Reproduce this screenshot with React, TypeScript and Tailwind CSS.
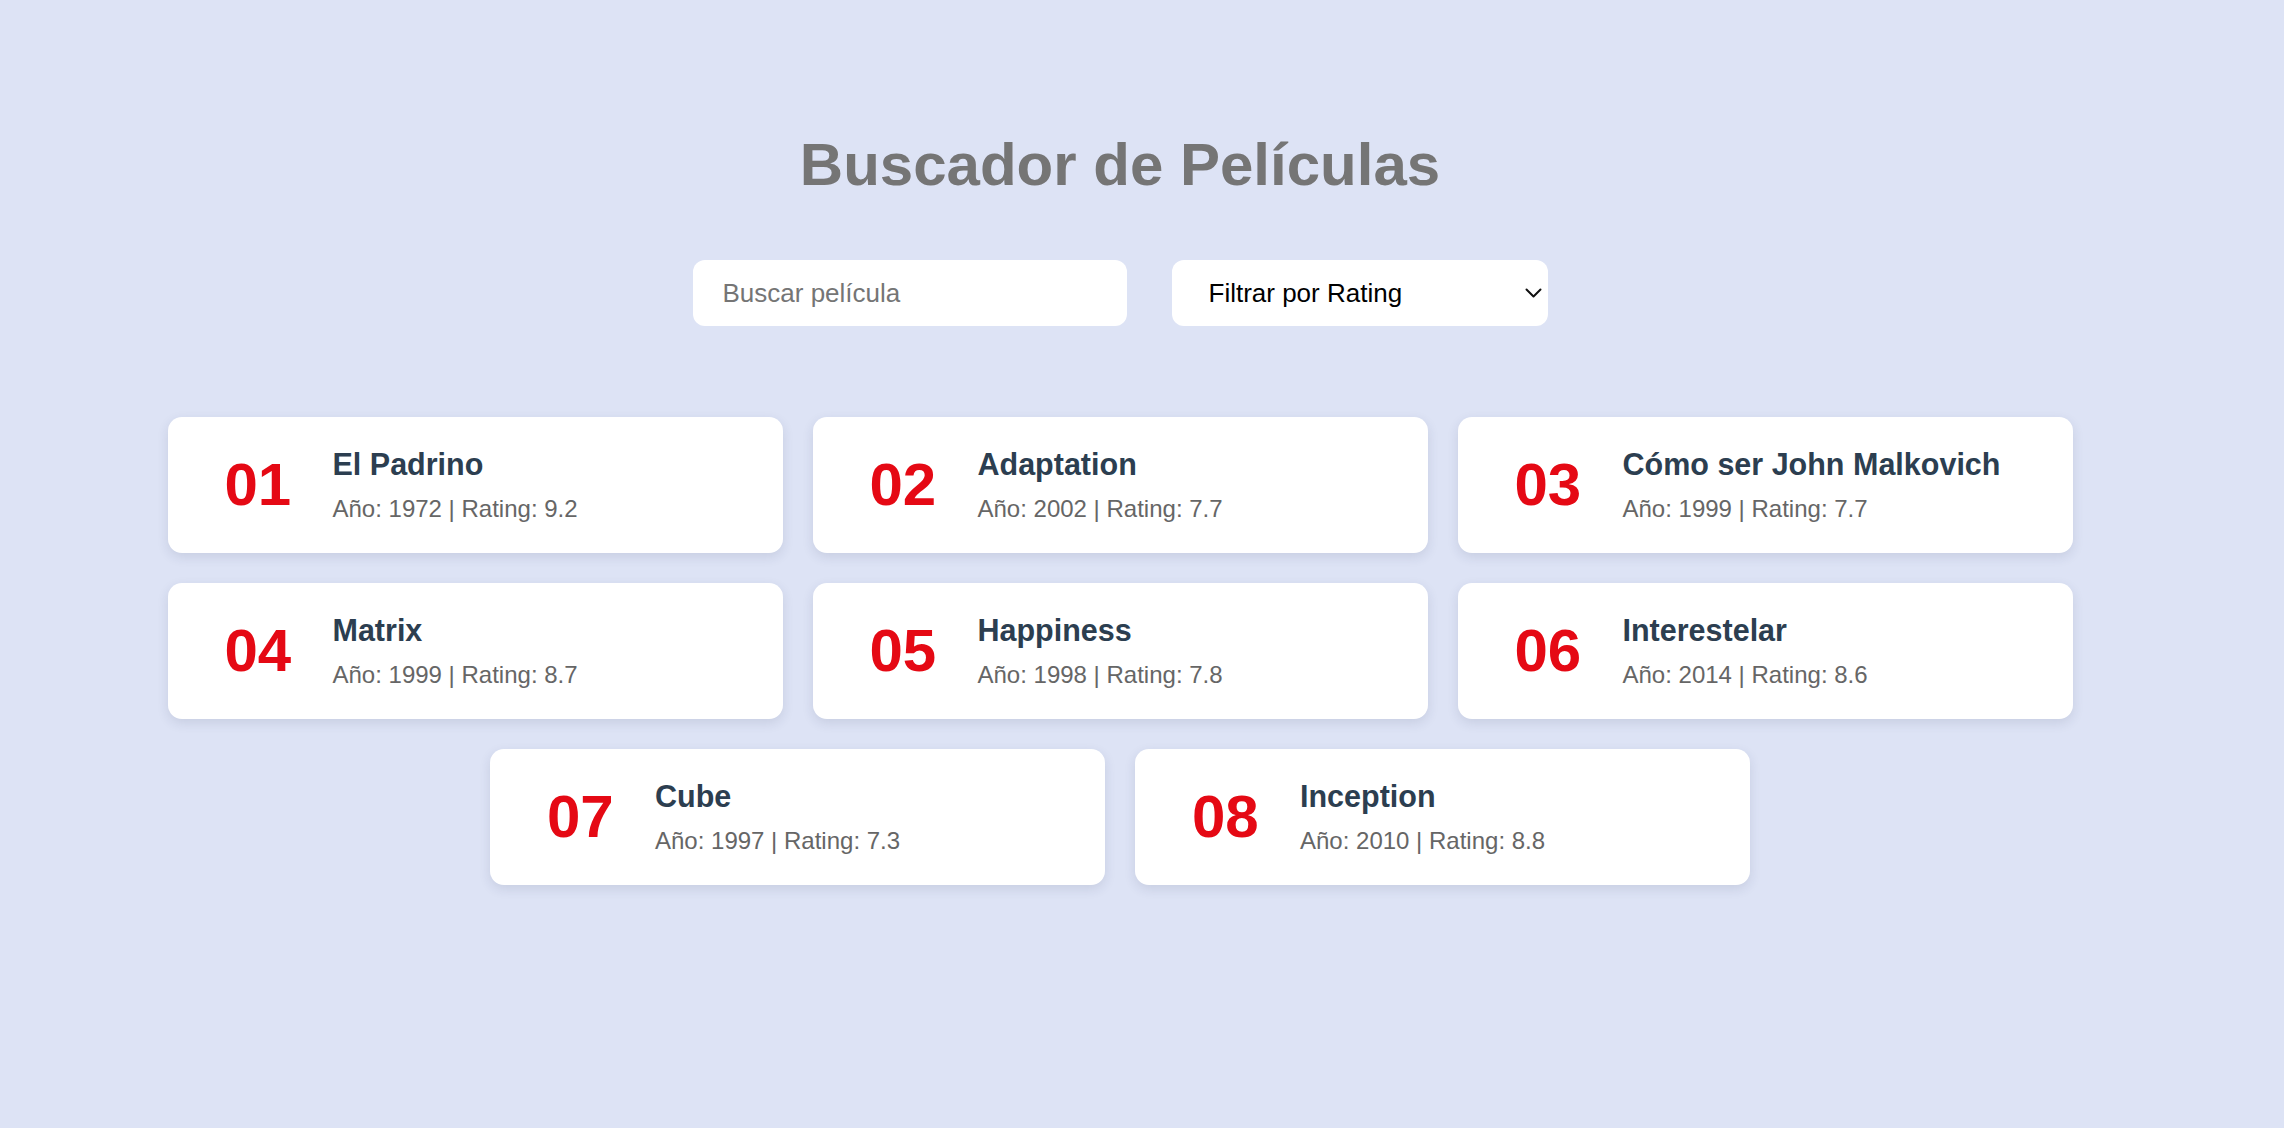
import React, { useState } from 'react';

interface Movie {
  title: string;
  year: number;
  rating: number;
}

const movies: Movie[] = [
  { title: 'El Padrino', year: 1972, rating: 9.2 },
  { title: 'Adaptation', year: 2002, rating: 7.7 },
  { title: 'Cómo ser John Malkovich', year: 1999, rating: 7.7 },
  { title: 'Matrix', year: 1999, rating: 8.7 },
  { title: 'Happiness', year: 1998, rating: 7.8 },
  { title: 'Interestelar', year: 2014, rating: 8.6 },
  { title: 'Cube', year: 1997, rating: 7.3 },
  { title: 'Inception', year: 2010, rating: 8.8 }
];

function MovieCard({ movie, index }: { movie: Movie; index: number }) {
  return (
    <div className="w-[615px] h-[136px] flex items-center pl-[57px] bg-white rounded-[14px] shadow-[0_4px_12px_rgba(40,50,90,0.12)]">
      <div className="w-[108px] shrink-0 text-[60px] leading-none font-bold text-[#e50914]">
        {String(index + 1).padStart(2, '0')}
      </div>
      <div className="flex flex-col">
        <h2 className="text-[30.5px] leading-[34px] font-bold text-[#2c3e50]">
          {movie.title}
        </h2>
        <p className="mt-[14px] text-[24px] leading-[28px] text-[#666666]">
          Año: {movie.year} | Rating: {movie.rating}
        </p>
      </div>
    </div>
  );
}

export default function App() {
  const [query, setQuery] = useState('');
  const [minRating, setMinRating] = useState('');

  const filtered = movies
    .map((m, i) => ({ m, i }))
    .filter(({ m }) => m.title.toLowerCase().includes(query.toLowerCase()))
    .filter(({ m }) => !minRating || m.rating >= Number(minRating));

  return (
    <div className="min-h-screen bg-[#dde3f5] font-['Liberation_Sans',Arial,sans-serif] pr-[44px]">
      <div className="flex flex-col items-center pt-[130px] pb-20">
        <h1 className="text-[60px] leading-[69px] font-bold text-[#757575]">
          Buscador de Películas
        </h1>

        <div className="mt-[61px] flex gap-[45px]">
          <input
            type="text"
            value={query}
            onChange={(e) => setQuery(e.target.value)}
            placeholder="Buscar película"
            className="w-[434px] h-[66px] px-[30px] rounded-[12px] bg-white text-[26px] text-black placeholder:text-[#757575] outline-none"
          />
          <div className="relative w-[376px] h-[66px]">
            <select
              value={minRating}
              onChange={(e) => setMinRating(e.target.value)}
              className="w-full h-full appearance-none pl-[37px] pr-12 rounded-[12px] bg-white text-[26px] text-black outline-none"
            >
              <option value="">Filtrar por Rating</option>
              <option value="9">9+</option>
              <option value="8">8+</option>
              <option value="7">7+</option>
            </select>
            <svg
              className="absolute right-[6px] top-1/2 -translate-y-1/2 pointer-events-none"
              width="17"
              height="10"
              viewBox="0 0 17 10"
              fill="none"
            >
              <path d="M1.5 1.5 L8.5 8.5 L15.5 1.5" stroke="#111" strokeWidth="2" strokeLinecap="round" strokeLinejoin="round" />
            </svg>
          </div>
        </div>

        <div className="mt-[91px] w-[1905px] flex flex-wrap justify-center gap-[30px]">
          {filtered.map(({ m, i }) => (
            <MovieCard key={m.title} movie={m} index={i} />
          ))}
        </div>
      </div>
    </div>
  );
}
